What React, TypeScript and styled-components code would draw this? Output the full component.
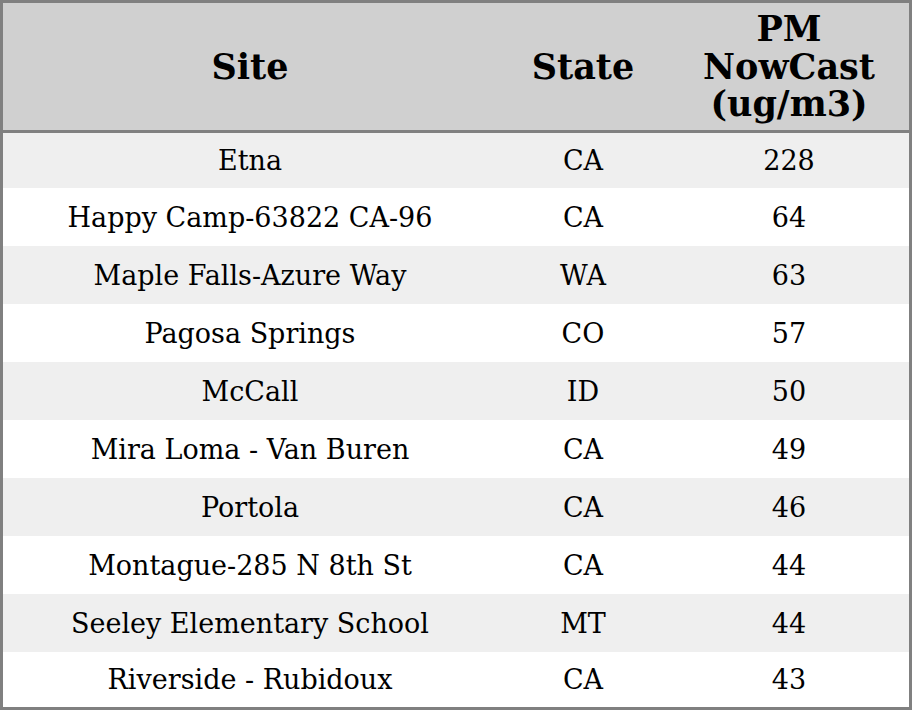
import React from 'react';
import styled, { createGlobalStyle } from 'styled-components';

const GlobalStyle = createGlobalStyle`
  html, body {
    margin: 0;
    padding: 0;
    background: #ffffff;
  }
`;

const Table = styled.table`
  width: 912px;
  border-collapse: collapse;
  border: 3px solid #808080;
  font-family: "DejaVu Serif", serif;
  color: #000;
`;

const HeadCell = styled.th<{ $w: number }>`
  width: ${(p) => p.$w}px;
  height: 125px;
  padding: 1px 0;
  background: #d0d0d0;
  border-bottom: 3px solid #808080;
  font-size: 35px;
  font-weight: bold;
  line-height: 37.5px;
  text-align: center;
  vertical-align: middle;
`;

const Row = styled.tr`
  height: 58px;
  &:nth-child(odd) {
    background: #efefef;
  }
  &:nth-child(even) {
    background: #ffffff;
  }
  &:first-child {
    height: 56px;
  }
  &:last-child {
    height: 57px;
  }
`;

const Cell = styled.td`
  padding: 1px 0 0;
  font-size: 27px;
  line-height: 31px;
  text-align: center;
  vertical-align: middle;
`;

const rows: [string, string, number][] = [
  ['Etna', 'CA', 228],
  ['Happy Camp-63822 CA-96', 'CA', 64],
  ['Maple Falls-Azure Way', 'WA', 63],
  ['Pagosa Springs', 'CO', 57],
  ['McCall', 'ID', 50],
  ['Mira Loma - Van Buren', 'CA', 49],
  ['Portola', 'CA', 46],
  ['Montague-285 N 8th St', 'CA', 44],
  ['Seeley Elementary School', 'MT', 44],
  ['Riverside - Rubidoux', 'CA', 43],
];

const App = () => {
  return (
    <>
      <GlobalStyle />
      <Table>
        <thead>
          <tr>
            <HeadCell $w={494}>Site</HeadCell>
            <HeadCell $w={172}>State</HeadCell>
            <HeadCell $w={240}>
              PM
              <br />
              NowCast
              <br />
              (ug/m3)
            </HeadCell>
          </tr>
        </thead>
        <tbody>
          {rows.map(([site, state, value]) => (
            <Row key={site}>
              <Cell>{site}</Cell>
              <Cell>{state}</Cell>
              <Cell>{value}</Cell>
            </Row>
          ))}
        </tbody>
      </Table>
    </>
  );
};

export default App;
